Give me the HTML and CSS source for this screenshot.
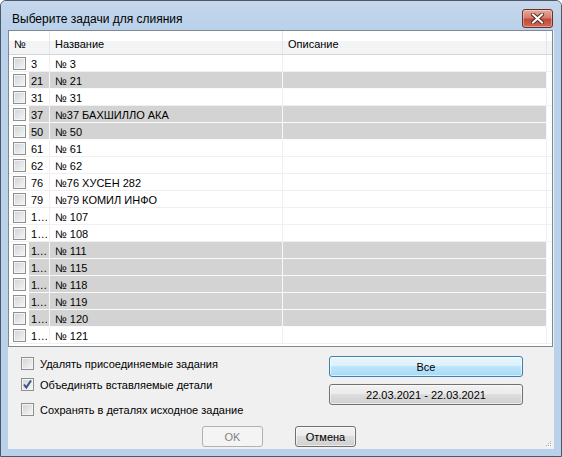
FILE: index.html
```html
<!DOCTYPE html>
<html lang="ru">
<head>
  <meta charset="UTF-8" />
  <title>Выберите задачи для слияния</title>
  <link rel="stylesheet" href="styles.css">
</head>
<body>
  <div class="window">
    <div class="titlebar">
      <span class="title">Выберите задачи для слияния</span>
      <button class="close" aria-label="Закрыть">
        <svg width="13" height="11" viewBox="0 0 13 11">
          <path d="M2 1.5 L11 9.5 M11 1.5 L2 9.5" stroke="#5a2a24" stroke-width="4" stroke-linecap="square" fill="none"/>
          <path d="M2 1.5 L11 9.5 M11 1.5 L2 9.5" stroke="#fff" stroke-width="2" stroke-linecap="square" fill="none"/>
        </svg>
      </button>
    </div>

    <div class="client">
      <div class="list">
        <div class="head">
          <div class="hcell">№</div>
          <div class="hcell">Название</div>
          <div class="hcell">Описание</div>
          <div class="hcell filler"></div>
        </div>
        <div class="rows">
          <div class="row"><div class="cell first"><span class="cb"></span><span class="num">3</span></div><div class="cell">№ 3</div><div class="cell"></div></div>
          <div class="row alt"><div class="cell first"><span class="cb"></span><span class="num">21</span></div><div class="cell">№ 21</div><div class="cell"></div></div>
          <div class="row"><div class="cell first"><span class="cb"></span><span class="num">31</span></div><div class="cell">№ 31</div><div class="cell"></div></div>
          <div class="row alt"><div class="cell first"><span class="cb"></span><span class="num">37</span></div><div class="cell">№37 БАХШИЛЛО АКА</div><div class="cell"></div></div>
          <div class="row alt"><div class="cell first"><span class="cb"></span><span class="num">50</span></div><div class="cell">№ 50</div><div class="cell"></div></div>
          <div class="row"><div class="cell first"><span class="cb"></span><span class="num">61</span></div><div class="cell">№ 61</div><div class="cell"></div></div>
          <div class="row"><div class="cell first"><span class="cb"></span><span class="num">62</span></div><div class="cell">№ 62</div><div class="cell"></div></div>
          <div class="row"><div class="cell first"><span class="cb"></span><span class="num">76</span></div><div class="cell">№76 ХУСЕН 282</div><div class="cell"></div></div>
          <div class="row"><div class="cell first"><span class="cb"></span><span class="num">79</span></div><div class="cell">№79 КОМИЛ ИНФО</div><div class="cell"></div></div>
          <div class="row"><div class="cell first"><span class="cb"></span><span class="num">107</span></div><div class="cell">№ 107</div><div class="cell"></div></div>
          <div class="row"><div class="cell first"><span class="cb"></span><span class="num">108</span></div><div class="cell">№ 108</div><div class="cell"></div></div>
          <div class="row alt"><div class="cell first"><span class="cb"></span><span class="num">111</span></div><div class="cell">№ 111</div><div class="cell"></div></div>
          <div class="row alt"><div class="cell first"><span class="cb"></span><span class="num">115</span></div><div class="cell">№ 115</div><div class="cell"></div></div>
          <div class="row alt"><div class="cell first"><span class="cb"></span><span class="num">118</span></div><div class="cell">№ 118</div><div class="cell"></div></div>
          <div class="row alt"><div class="cell first"><span class="cb"></span><span class="num">119</span></div><div class="cell">№ 119</div><div class="cell"></div></div>
          <div class="row alt"><div class="cell first"><span class="cb"></span><span class="num">120</span></div><div class="cell">№ 120</div><div class="cell"></div></div>
          <div class="row"><div class="cell first"><span class="cb"></span><span class="num">121</span></div><div class="cell">№ 121</div><div class="cell"></div></div>
        </div>
      </div>

      <div class="bottom">
        <div class="opts">
          <label class="opt opt-1"><span class="cb"></span>Удалять присоединяемые задания</label>
          <label class="opt opt-2"><span class="cb checked"><svg width="11" height="11" viewBox="0 0 11 11"><path d="M2 5.5 L4.3 8.5 L9 1.5" stroke="#3d4f86" stroke-width="2" fill="none"/></svg></span>Объединять вставляемые детали</label>
          <label class="opt opt-3"><span class="cb"></span>Сохранять в деталях исходное задание</label>
        </div>
        <div class="side">
          <button class="btn hot">Все</button>
          <button class="btn">22.03.2021 - 22.03.2021</button>
        </div>
        <div class="actions">
          <button class="btn small" disabled>OK</button>
          <button class="btn small">Отмена</button>
        </div>
        <svg class="grip" width="7" height="7" viewBox="0 0 7 7">
          <rect x="5" y="1" width="1" height="1" fill="#a9a9a9"/>
          <rect x="3" y="3" width="1" height="1" fill="#a9a9a9"/>
          <rect x="5" y="3" width="1" height="1" fill="#a9a9a9"/>
          <rect x="1" y="5" width="1" height="1" fill="#a9a9a9"/>
          <rect x="3" y="5" width="1" height="1" fill="#a9a9a9"/>
          <rect x="5" y="5" width="1" height="1" fill="#a9a9a9"/>
          <rect x="6" y="2" width="1" height="1" fill="#fff"/>
          <rect x="4" y="4" width="1" height="1" fill="#fff"/>
          <rect x="6" y="4" width="1" height="1" fill="#fff"/>
          <rect x="2" y="6" width="1" height="1" fill="#fff"/>
          <rect x="4" y="6" width="1" height="1" fill="#fff"/>
          <rect x="6" y="6" width="1" height="1" fill="#fff"/>
        </svg>
      </div>
    </div>
  </div>
</body>
</html>
```

FILE: styles.css
```css
* {
  box-sizing: border-box;
}

html,
body {
  margin: 0;
}

body {
  width: 562px;
  height: 457px;
  overflow: hidden;
  font-family: "Liberation Sans", Arial, sans-serif;
  font-size: 11px;
  color: #000;
}

/* window frame */

.window {
  width: 562px;
  height: 457px;
  border: 1px solid #4a5869;
  border-radius: 6px 6px 0 0;
  background: #b9d1ea;
  display: flex;
  flex-direction: column;
}

.titlebar {
  height: 29px;
  flex: none;
  display: flex;
  align-items: flex-start;
  justify-content: space-between;
  padding: 0 8px 0 11px;
  border-radius: 5px 5px 0 0;
  background: linear-gradient(#c5d7ec, #b9d1ea);
}

.title {
  font-size: 12px;
  line-height: 16px;
  padding-top: 10px;
}

.close {
  margin-top: 8px;
  width: 31px;
  height: 19px;
  padding: 0;
  border: 1px solid #6f2f27;
  border-radius: 3px;
  background: linear-gradient(#e8a899 0%, #d47f6f 45%, #c4493a 55%, #cf6a56 100%);
  box-shadow: inset 0 0 0 1px rgba(255, 255, 255, 0.35);
  display: flex;
  align-items: center;
  justify-content: center;
}

.close svg {
  display: block;
}

.client {
  flex: 1;
  margin: 0 7px 7px;
  background: #f0f0f0;
  display: flex;
  flex-direction: column;
}

/* list view */

.list {
  width: 545px;
  height: 317px;
  flex: none;
  border: 1px solid #828790;
  background: #fff;
  overflow: hidden;
}

.head,
.row {
  display: grid;
  grid-template-columns: 41px 233px 264px 1fr;
}

.head {
  height: 24px;
  border-bottom: 1px solid #d5d5d5;
  background: linear-gradient(#fff 0, #fff 45%, #f3f4f6 45%, #f3f4f6 100%);
}

.hcell {
  border-right: 1px solid #e3e5e8;
  padding: 3px 0 0 5px;
  line-height: 20px;
}

.hcell.filler {
  border-right: none;
}

.row {
  height: 17px;
  border-bottom: 1px solid #f0f0f0;
  grid-template-columns: 41px 233px 1fr;
}

.cell {
  border-right: 1px solid #f0f0f0;
  padding: 2px 0 0 5px;
  line-height: 14px;
  white-space: nowrap;
}

.cell:last-child {
  margin-right: 5px;
}

.row.alt {
  border-bottom-color: #fafafa;
}

.row.alt .cell {
  background: #d3d3d3;
  border-right-color: #f8f8f8;
}

.cell.first {
  display: flex;
  align-items: center;
  padding: 0;
}

.row.alt .cell.first {
  background: linear-gradient(90deg, #fff 20px, #d3d3d3 20px);
}

.cell.first .cb {
  margin-left: 4px;
}

.num {
  width: 16px;
  margin-left: 5px;
  padding-top: 2px;
  overflow: hidden;
  text-overflow: ellipsis;
  white-space: nowrap;
}

/* checkbox */

.cb {
  width: 13px;
  height: 13px;
  flex: none;
  border: 1px solid #8e8f8f;
  background: linear-gradient(135deg, #cfd2d6, #f7f7f7);
  box-shadow: inset 0 0 0 1px #f4f4f4;
  display: flex;
  align-items: center;
  justify-content: center;
}

.cb.checked svg {
  display: block;
}

/* lower panel */

.bottom {
  flex: 1;
  position: relative;
  display: grid;
  grid-template-columns: 1fr 194px;
  padding: 9px 31px 0 13px;
}

.opts {
  height: 60px;
  display: flex;
  flex-direction: column;
}

.opt {
  display: flex;
  align-items: center;
  gap: 6px;
  height: 13px;
  font-size: 11px;
}

.opt-1 {
  margin-top: 1px;
}

.opt-2 {
  margin-top: 8px;
}

.opt-3 {
  margin-top: 12px;
}

.side {
  display: flex;
  flex-direction: column;
  gap: 7px;
}

.btn {
  height: 21px;
  padding: 0;
  font-family: inherit;
  font-size: 11px;
  color: #000;
  border: 1px solid #707070;
  border-radius: 3px;
  background: linear-gradient(#f2f2f2 0, #ebebeb 50%, #dddddd 50%, #cfcfcf 100%);
  box-shadow: inset 0 0 0 1px rgba(255, 255, 255, 0.6);
}

.btn.hot {
  border-color: #3c7fb1;
  background: linear-gradient(#eaf6fd 0, #d9f0fc 50%, #bee6fd 50%, #a7d9f5 100%);
}

.btn:disabled {
  border-color: #adb2b5;
  background: #f4f4f4;
  color: #838383;
  box-shadow: none;
}

.actions {
  grid-column: 1 / 3;
  display: flex;
  gap: 32px;
  margin: 8px 0 0 181px;
}

.btn.small {
  width: 61px;
}

.grip {
  position: absolute;
  right: 2px;
  bottom: 2px;
}
```
